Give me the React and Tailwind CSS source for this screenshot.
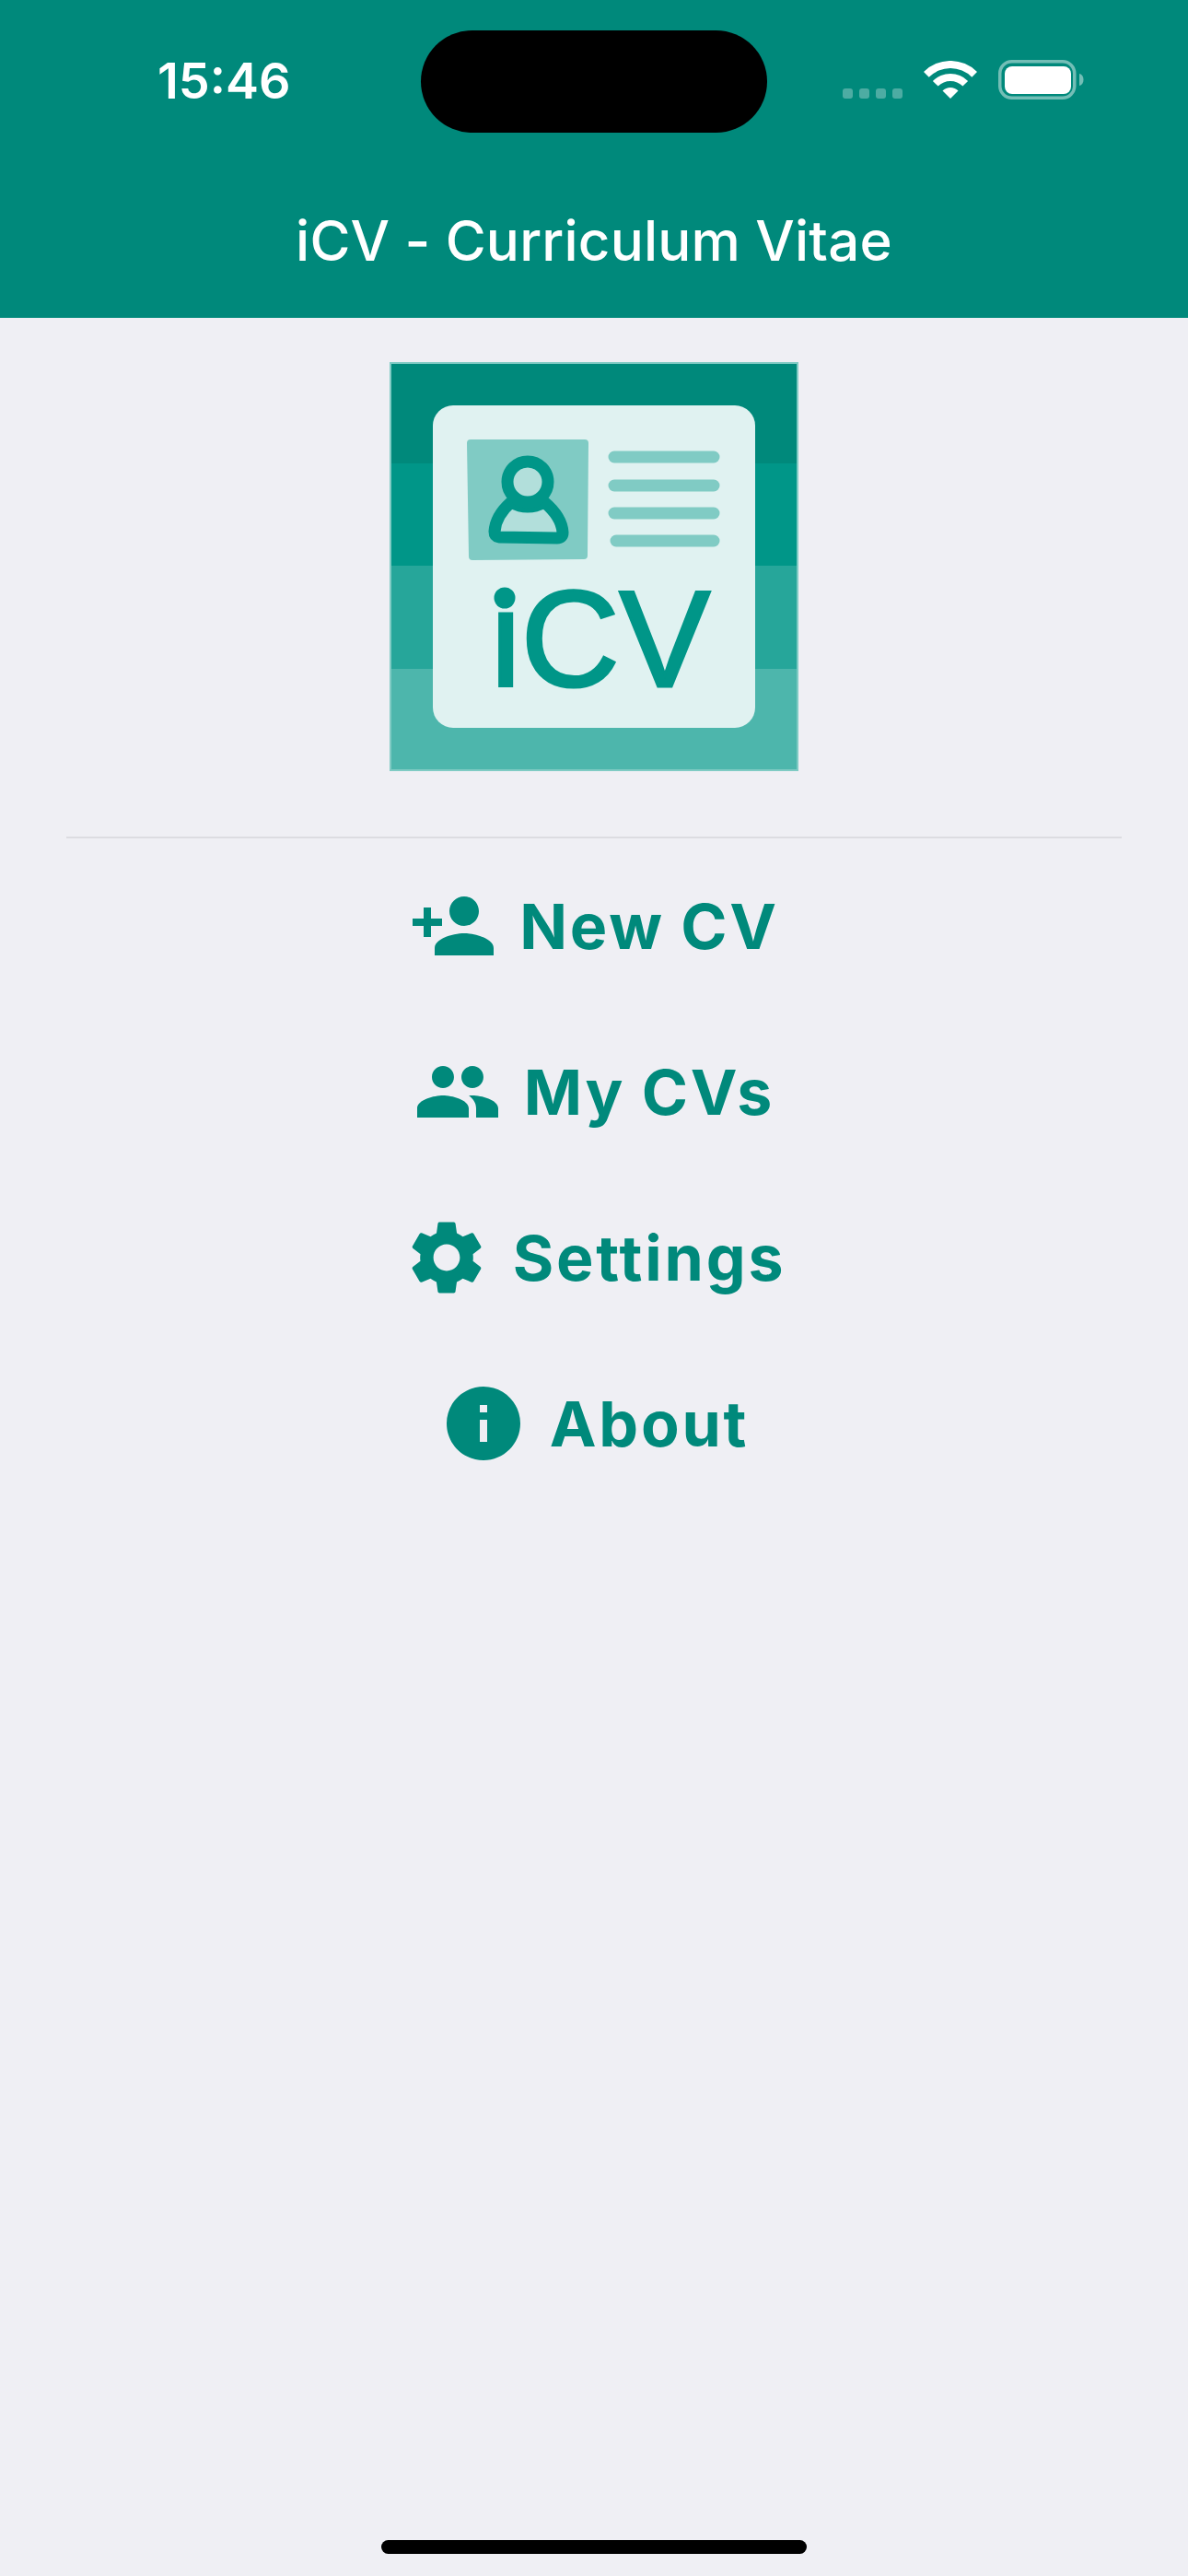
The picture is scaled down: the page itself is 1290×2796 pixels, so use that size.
import { MdPersonAdd, MdPeople, MdSettings, MdInfo } from 'react-icons/md';

const MENU = [
  { label: 'New CV', Icon: MdPersonAdd },
  { label: 'My CVs', Icon: MdPeople },
  { label: 'Settings', Icon: MdSettings },
  { label: 'About', Icon: MdInfo },
];

function StatusBar() {
  return (
    <div className="relative h-[176px] shrink-0">
      <div className="absolute left-[457px] top-[33px] h-[111px] w-[376px] rounded-[56px] bg-black" />
      <div className="flex h-full items-start justify-between pl-[171px] pr-[112px] pt-[56px]">
        <span className="text-[54px] leading-[64px] font-semibold text-white [font-family:Inter,sans-serif]">15:46</span>
        <div className="flex items-start pt-[9px]">
          <div className="mt-[31px] flex gap-[7px]">
            {[0, 1, 2, 3].map((i) => (
              <span key={i} className="h-[11px] w-[11px] rounded-[3px] bg-white/30" />
            ))}
          </div>
          <svg className="ml-[22px] mt-[1px]" width="60" height="42" viewBox="0 0 60 42" fill="white">
            <path d="M1 12 A41 41 0 0 1 59 12 L53.300 17.700 A33 33 0 0 0 6.700 17.700 Z" />
            <path d="M10.900 21.900 A27 27 0 0 1 49.100 21.900 L43.400 27.600 A19 19 0 0 0 16.600 27.600 Z" />
            <path d="M30 41 L21.500 32.500 A12 12 0 0 1 38.500 32.500 Z" />
          </svg>
          <svg className="ml-[22px]" width="94" height="44" viewBox="0 0 94 44" fill="none">
            <rect x="1.750" y="1.750" width="81" height="39.500" rx="13" stroke="white" strokeOpacity="0.45" strokeWidth="3.500" />
            <rect x="7" y="7" width="72" height="30" rx="8" fill="white" />
            <path d="M88 15 C94 16 94 27 88 28 Z" fill="white" fillOpacity="0.45" />
          </svg>
        </div>
      </div>
    </div>
  );
}

// app logo, bands + id card
function Logo() {
  return (
    <svg width="444" height="444" viewBox="0 0 444 444" className="block">
      <rect width="444" height="110" fill="#00897b" />
      <rect y="110" width="444" height="111" fill="#009688" />
      <rect y="221" width="444" height="112" fill="#26a69a" />
      <rect y="333" width="444" height="111" fill="#4db6ac" />
      <rect x="1" y="1" width="442" height="442" fill="none" stroke="#80cbc4" strokeWidth="2" />
      <rect x="47" y="47" width="350" height="350" rx="22" fill="#e0f2f1" />
      <path d="M88 84 L212 84 Q216 84 216 88 L215 210 Q215 214 211 214 L90 215 Q86 215 86 211 L84 88 Q84 84 88 84 Z" fill="#80cbc4" />
      <path d="M132 152 Q150 162 168 152 Q187 168 188 185 Q188 191 182 191 L119 190 Q114 189 114 184 Q115 167 132 152 Z" fill="#b2dfdb" stroke="#009688" strokeWidth="13" strokeLinejoin="round" />
      <circle cx="150" cy="130" r="22" fill="#b2dfdb" stroke="#009688" strokeWidth="13" />
      <g stroke="#80cbc4" strokeWidth="13" strokeLinecap="round">
        <line x1="244" y1="103" x2="352" y2="103" />
        <line x1="244" y1="134" x2="352" y2="134" />
        <line x1="244" y1="164" x2="352" y2="164" />
        <line x1="246" y1="194" x2="352" y2="194" />
      </g>
      <text x="229" y="352" textAnchor="middle" fontSize="148" fontFamily="'Liberation Sans', Arial, sans-serif" fill="#009688" stroke="#009688" strokeWidth="3">iCV</text>
      {/* the i has a round dot in the icon */}
      <rect x="108" y="232" width="34" height="36" fill="#e0f2f1" />
      <circle cx="125" cy="256" r="11.500" fill="#009688" />
    </svg>
  );
}

function MenuButton({ label, Icon }) {
  return (
    <button className="flex h-[180px] w-full items-center justify-center gap-[24px] text-[#00897b]">
      <Icon size={96} />
      <span className="text-[68px] leading-none font-bold tracking-[2.8px] [word-spacing:-1.5px] [font-family:Inter,sans-serif]">{label}</span>
    </button>
  );
}

export default function App() {
  return (
    <div className="flex h-[2796px] w-[1290px] flex-col overflow-hidden bg-[#efeff4]">
      <header className="h-[345px] shrink-0 bg-[#00897b]">
        <StatusBar />
        <h1 className="text-center text-[60px] leading-[170px] font-medium tracking-[0.2px] text-white [font-family:Inter,sans-serif]">
          iCV - Curriculum Vitae
        </h1>
      </header>
      <div className="flex justify-center pt-[48px]">
        <Logo />
      </div>
      <div className="mx-[72px] mt-[71px] h-[2px] bg-[#dcdce1]" />
      <nav className="flex flex-col pt-[5px]">
        {MENU.map((item) => (
          <MenuButton key={item.label} {...item} />
        ))}
      </nav>
      <div className="mt-auto mb-[24px] h-[15px] w-[462px] self-center rounded-full bg-black" />
    </div>
  );
}
